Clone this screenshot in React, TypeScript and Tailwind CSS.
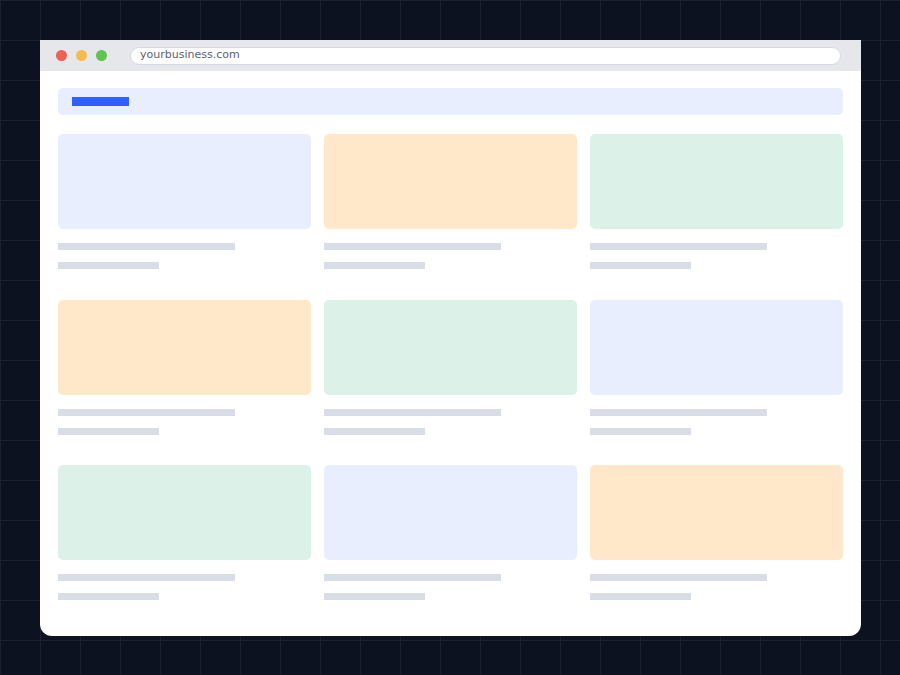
const tints = [
  ['bg-[#e8eefd]', 'bg-[#fee8c9]', 'bg-[#dcf2e8]'],
  ['bg-[#fee8c9]', 'bg-[#dcf2e8]', 'bg-[#e8eefd]'],
  ['bg-[#dcf2e8]', 'bg-[#e8eefd]', 'bg-[#fee8c9]'],
];

function Card({ tint }: { tint: string }) {
  return (
    <div className="flex flex-col">
      <div className={`h-[95px] rounded-[5px] ${tint}`} />
      <div className="mt-[14px] h-[7px] w-[177px] bg-[#d9dde6]" />
      <div className="mt-[12px] h-[7px] w-[101px] bg-[#d9dde6]" />
    </div>
  );
}

export default function App() {
  return (
    <div className="w-[900px] h-[675px] overflow-hidden bg-[#0c1220] bg-[linear-gradient(to_right,#1a2231_1px,transparent_1px),linear-gradient(to_bottom,#1a2231_1px,transparent_1px)] bg-[size:40px_40px] pt-[40px] pl-[40px]">
      <div className="w-[821px] h-[596px] bg-white rounded-b-[12px] overflow-hidden flex flex-col">
        {/* title bar */}
        <div className="h-[31px] bg-[#e5e7eb] flex items-center pl-[16px] pr-[20px]">
          <div className="flex gap-[9px]">
            <span className="w-[11px] h-[11px] rounded-full bg-[#ec6255]" />
            <span className="w-[11px] h-[11px] rounded-full bg-[#f4bc4c]" />
            <span className="w-[11px] h-[11px] rounded-full bg-[#5fc452]" />
          </div>
          <div className="ml-[23px] flex-1 h-[18px] rounded-full bg-white border border-[#d6d9df] flex items-center pl-[9px] text-[11px] text-[#5b6270] font-['DejaVu_Sans',sans-serif]">
            yourbusiness.com
          </div>
        </div>

        {/* page */}
        <div className="px-[18px] pt-[17px]">
          <div className="h-[27px] rounded-[5px] bg-[#e8eefd] flex items-center pl-[14px]">
            <div className="w-[57px] h-[9px] bg-[#2f5fff]" />
          </div>

          <div className="mt-[19px] flex flex-col gap-[30.5px]">
            {tints.map((row, i) => (
              <div key={i} className="grid grid-cols-3 gap-[13px]">
                {row.map((t, j) => (
                  <Card key={j} tint={t} />
                ))}
              </div>
            ))}
          </div>
        </div>
      </div>
    </div>
  );
}
